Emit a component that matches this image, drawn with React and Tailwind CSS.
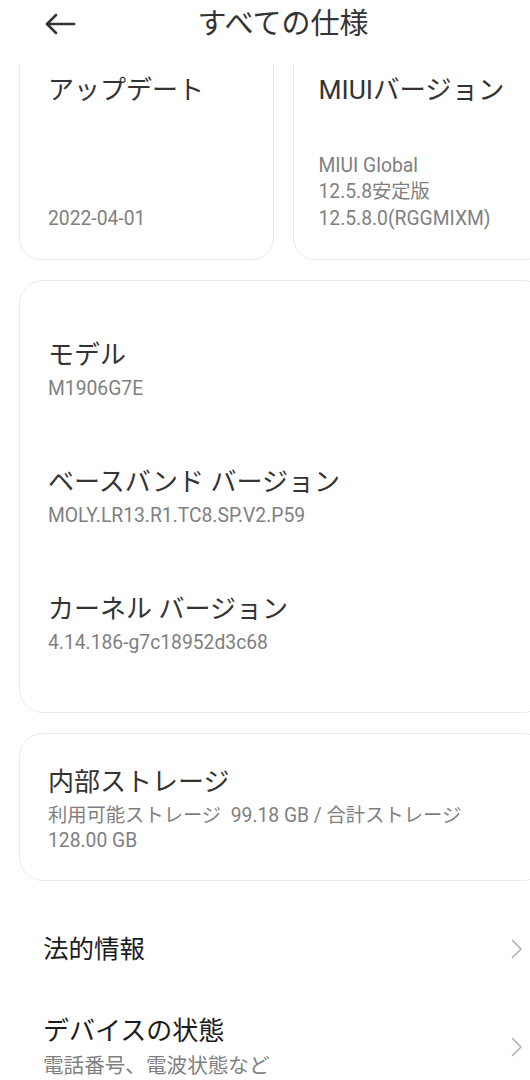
import React from "react";

const font = { fontFamily: 'Roboto, "Noto Sans CJK JP", sans-serif' };

const specs = [
  { title: "モデル", value: "M1906G7E" },
  { title: "ベースバンド バージョン", value: "MOLY.LR13.R1.TC8.SP.V2.P59" },
  { title: "カーネル バージョン", value: "4.14.186-g7c18952d3c68" },
];

const BackArrow = () => (
  <svg width="32" height="22" viewBox="0 0 32 22" fill="none" stroke="#333" strokeWidth="2.6" strokeLinecap="round" strokeLinejoin="round">
    <path d="M3 11H30" />
    <path d="M12 2L3 11L12 20" />
  </svg>
);

const Chevron = () => (
  <svg width="12" height="20" viewBox="0 0 12 20" fill="none" stroke="#b0b0b0" strokeWidth="1.6" strokeLinecap="round" strokeLinejoin="round">
    <path d="M1.5 1.5L10 10L1.5 18.5" />
  </svg>
);

const SpecItem = ({ title, value }) => (
  <div>
    <div className="text-[26px] leading-[34px] text-[#333]">{title}</div>
    <div className="mt-[4px] text-[19.3px] leading-[26px] text-[#7f7f7f]">{value}</div>
  </div>
);

export default function App() {
  return (
    <div className="w-[530px] h-[1080px] overflow-hidden bg-white" style={font}>
      <div className="w-[566px]">
        {/* Header */}
        <div className="h-[64px]">
          <div className="relative h-[48px] flex items-center justify-center">
            <button className="absolute left-[44px] top-[13px]">
              <BackArrow />
            </button>
            <h1 className="text-[29px] leading-[36px] text-[#333] font-normal">すべての仕様</h1>
          </div>
        </div>

        <div className="px-[19px]">
          {/* Top cards, scrolled partly under the header */}
          <div className="h-[196px] overflow-hidden grid grid-cols-2 gap-[19px]">
            <div className="-mt-[30px] h-[226px] rounded-[22px] border border-[#ebebeb] pl-[28px] pr-[16px] pt-[38px] pb-[27px] flex flex-col justify-between">
              <div className="text-[26px] leading-[34px] text-[#333]">アップデート</div>
              <div className="text-[19.3px] leading-[26px] text-[#7f7f7f]">2022-04-01</div>
            </div>
            <div className="-mt-[30px] h-[226px] rounded-[22px] border border-[#ebebeb] pl-[25px] pr-[16px] pt-[38px] pb-[27px] flex flex-col justify-between">
              <div className="text-[26.4px] leading-[34px] text-[#333] whitespace-nowrap">MIUIバージョン</div>
              <div className="text-[19.3px] leading-[26.5px] text-[#7f7f7f]">
                <div>MIUI Global</div>
                <div>12.5.8安定版</div>
                <div>12.5.8.0(RGGMIXM)</div>
              </div>
            </div>
          </div>

          {/* Device specs */}
          <div className="mt-[20px] rounded-[24px] border border-[#ebebeb] pl-[28px] pr-[28px] pt-[57px] pb-[56px] flex flex-col gap-[63px]">
            {specs.map((s) => (
              <SpecItem key={s.title} title={s.title} value={s.value} />
            ))}
          </div>

          {/* Storage */}
          <div className="mt-[20px] rounded-[24px] border border-[#ebebeb] pl-[28px] pr-[28px] pt-[31px] pb-[27px]">
            <div className="text-[26px] leading-[34px] text-[#333]">内部ストレージ</div>
            <div className="mt-[4px] text-[19.3px] leading-[25px] text-[#7f7f7f]">
              <div className="whitespace-pre">利用可能ストレージ  99.18 GB / 合計ストレージ</div>
              <div>128.00 GB</div>
            </div>
          </div>
        </div>

        {/* Menu rows */}
        <div className="mt-[51px] pl-[43px] pr-[43px]">
          <div className="flex items-center justify-between h-[34px]">
            <div className="text-[25.5px] leading-[34px] text-[#1c1c1c]">法的情報</div>
            <Chevron />
          </div>
          <div className="mt-[48px] flex items-center justify-between">
            <div>
              <div className="text-[26px] leading-[34px] text-[#1c1c1c]">デバイスの状態</div>
              <div className="mt-[5px] text-[20.6px] leading-[26px] text-[#7f7f7f]">電話番号、電波状態など</div>
            </div>
            <Chevron />
          </div>
        </div>
      </div>
    </div>
  );
}
